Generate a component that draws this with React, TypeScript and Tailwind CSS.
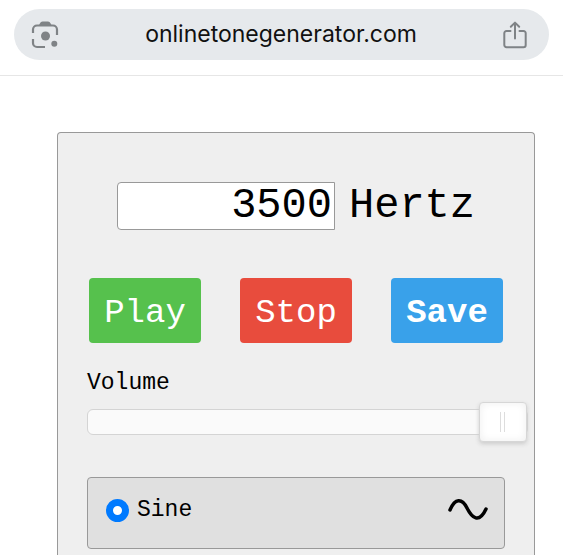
import { useState } from "react";

const actions = [
  { label: "Play", style: "bg-[#56c14d]" },
  { label: "Stop", style: "bg-[#e84c3d]" },
  { label: "Save", style: "bg-[#39a1ea] font-bold" },
];

function LensIcon() {
  return (
    <svg
      width="28"
      height="28"
      viewBox="0 0 28 28"
      fill="none"
      stroke="#7f8386"
      strokeWidth="2.2"
      aria-hidden="true"
    >
      <path d="M2 12V8.500A4 4 0 0 1 6 4.500H22A4 4 0 0 1 26 8.500V14" />
      <path d="M2 18V22A4 4 0 0 0 6 26H14" />
      <path
        d="M7.500 5L9 2.200Q9.700 .5 11.500 .5H17Q18.800 .5 19.500 2.200L21 5Z"
        fill="#7f8386"
        stroke="none"
      />
      <circle cx="14.500" cy="15" r="4.500" fill="#7f8386" stroke="none" />
      <circle cx="23.300" cy="22.800" r="3" fill="#7f8386" stroke="none" />
    </svg>
  );
}

function ShareIcon() {
  return (
    <svg
      width="24"
      height="28"
      viewBox="0 0 24 28"
      fill="none"
      stroke="#7f8386"
      strokeWidth="2"
      strokeLinecap="round"
      strokeLinejoin="round"
      aria-hidden="true"
    >
      <path d="M7.500 10H3.500A2.200 2.200 0 0 0 1.300 12.200V24A2.200 2.200 0 0 0 3.500 26.200H20.500A2.200 2.200 0 0 0 22.700 24V12.200A2.200 2.200 0 0 0 20.500 10H16.500" />
      <path d="M12 17.500V1.800M7.800 5.800L12 1.600L16.200 5.800" />
    </svg>
  );
}

function AddressBar() {
  return (
    <header className="border-b border-[#e6e6e6] px-3.5 pt-[9px] pb-[15px]">
      <div className="flex h-[51px] items-center justify-between rounded-full bg-[#e6e9ec] pr-[22px] pl-[17px]">
        <button type="button" aria-label="Search with camera">
          <LensIcon />
        </button>
        <span className="font-[Inter,sans-serif] text-[23px] text-[#111]">
          onlinetonegenerator.com
        </span>
        <button type="button" aria-label="Share">
          <ShareIcon />
        </button>
      </div>
    </header>
  );
}

export default function App() {
  const [frequency, setFrequency] = useState("3500");
  const [volume, setVolume] = useState(100);

  return (
    <div className="flex min-h-screen flex-col bg-white font-['Liberation_Mono',monospace] text-black">
      <AddressBar />
      <main className="flex flex-1 flex-col pt-14 pr-7 pl-[57px]">
        <section className="flex-1 rounded-t border border-b-0 border-[#999] bg-[#efefef] px-[29px] pt-[49px] pb-1">
          <div className="flex items-center justify-center gap-3.5">
            <input
              id="frequency"
              type="text"
              inputMode="numeric"
              value={frequency}
              onChange={(e) => setFrequency(e.target.value)}
              className="h-12 w-[218px] rounded-l border border-[#999] bg-white pr-0.5 text-right text-[42px] leading-none"
            />
            <label htmlFor="frequency" className="text-[42px] leading-none">
              Hertz
            </label>
          </div>

          <div className="mt-12 flex justify-between px-0.5">
            {actions.map((action) => (
              <button
                key={action.label}
                type="button"
                className={`h-[65px] w-28 rounded pt-1 text-[34px] leading-none text-white ${action.style}`}
              >
                {action.label}
              </button>
            ))}
          </div>

          <label htmlFor="volume" className="mt-6 block text-[23px] leading-8">
            Volume
          </label>
          {/* the thumb hangs over the right edge at full volume */}
          <div className="-mr-[23px]">
            <input
              id="volume"
              type="range"
              min={0}
              max={100}
              value={volume}
              onChange={(e) => setVolume(Number(e.target.value))}
              className="block h-[46px] w-full appearance-none bg-transparent [&::-webkit-slider-runnable-track]:h-[26px] [&::-webkit-slider-runnable-track]:rounded-md [&::-webkit-slider-runnable-track]:border [&::-webkit-slider-runnable-track]:border-[#d4d4d4] [&::-webkit-slider-runnable-track]:bg-[#fafafa] [&::-webkit-slider-thumb]:-mt-2 [&::-webkit-slider-thumb]:h-10 [&::-webkit-slider-thumb]:w-12 [&::-webkit-slider-thumb]:appearance-none [&::-webkit-slider-thumb]:rounded [&::-webkit-slider-thumb]:border [&::-webkit-slider-thumb]:border-[#d6d6d6] [&::-webkit-slider-thumb]:bg-white [&::-webkit-slider-thumb]:bg-[linear-gradient(90deg,#ddd_1px,transparent_1px,transparent_4px,#ddd_4px,#ddd_5px,transparent_5px)] [&::-webkit-slider-thumb]:bg-[length:6px_20px] [&::-webkit-slider-thumb]:bg-center [&::-webkit-slider-thumb]:bg-no-repeat [&::-webkit-slider-thumb]:shadow-[inset_0_0_8px_#eee,0_2px_4px_#ccc]"
            />
          </div>

          <div className="mt-8 flex h-[72px] items-start justify-between rounded border border-[#999] bg-[#e0e0e0] pt-4 pr-4 pl-[18px]">
            <label className="flex h-8 items-center gap-2 text-[23px] leading-none">
              <input
                type="radio"
                name="wave"
                defaultChecked
                className="size-[23px] appearance-none rounded-full border-[7px] border-[#007aff] bg-white"
              />
              Sine
            </label>
            <svg
              width="40"
              height="32"
              viewBox="0 0 40 32"
              fill="none"
              stroke="#000"
              strokeWidth="3.5"
              strokeLinecap="round"
              aria-hidden="true"
            >
              <path d="M2 16C7 4 14 4 19 14S31 30 38 15" />
            </svg>
          </div>
        </section>
      </main>
    </div>
  );
}
